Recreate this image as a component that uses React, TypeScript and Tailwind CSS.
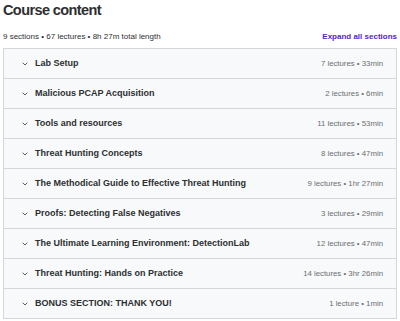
import React from "react";

const sections = [
  { title: "Lab Setup", meta: "7 lectures • 33min" },
  { title: "Malicious PCAP Acquisition", meta: "2 lectures • 6min" },
  { title: "Tools and resources", meta: "11 lectures • 53min" },
  { title: "Threat Hunting Concepts", meta: "8 lectures • 47min" },
  { title: "The Methodical Guide to Effective Threat Hunting", meta: "9 lectures • 1hr 27min" },
  { title: "Proofs: Detecting False Negatives", meta: "3 lectures • 29min" },
  { title: "The Ultimate Learning Environment: DetectionLab", meta: "12 lectures • 47min" },
  { title: "Threat Hunting: Hands on Practice", meta: "14 lectures • 3hr 26min" },
  { title: "BONUS SECTION: THANK YOU!", meta: "1 lecture • 1min" },
];

const Chevron = () => (
  <svg width="6" height="4" viewBox="0 0 6 4" fill="none" className="shrink-0">
    <path d="M1 1 L3 3 L5 1" stroke="#4a4d50" strokeWidth="0.9" strokeLinecap="round" strokeLinejoin="round" />
  </svg>
);

const App = () => {
  return (
    <div className="w-[400px] h-[321px] bg-white px-[3px] text-[#2d2f31] font-['Liberation_Sans',Arial,sans-serif] overflow-hidden">
      <h2 className="text-[14.5px] leading-[20px] font-bold tracking-[-0.6px]">Course content</h2>
      <div className="mt-[11px] mb-[5px] flex items-center justify-between h-[12px]">
        <span className="text-[8px] text-[#2d2f31]">9 sections • 67 lectures • 8h 27m total length</span>
        <button className="text-[8px] font-bold text-[#5624d0]">Expand all sections</button>
      </div>
      <div className="border border-[#d1d7dc] border-b-0">
        {sections.map((s) => (
          <div
            key={s.title}
            className="h-[30px] flex items-center justify-between bg-[#f7f9fa] border-b border-[#d1d7dc] pl-[18px] pr-[13px]"
          >
            <div className="flex items-center gap-[7px]">
              <Chevron />
              <span className="text-[9px] font-bold">{s.title}</span>
            </div>
            <span className="text-[7.8px] text-[#6a6f73]">{s.meta}</span>
          </div>
        ))}
      </div>
    </div>
  );
};

export default App;
